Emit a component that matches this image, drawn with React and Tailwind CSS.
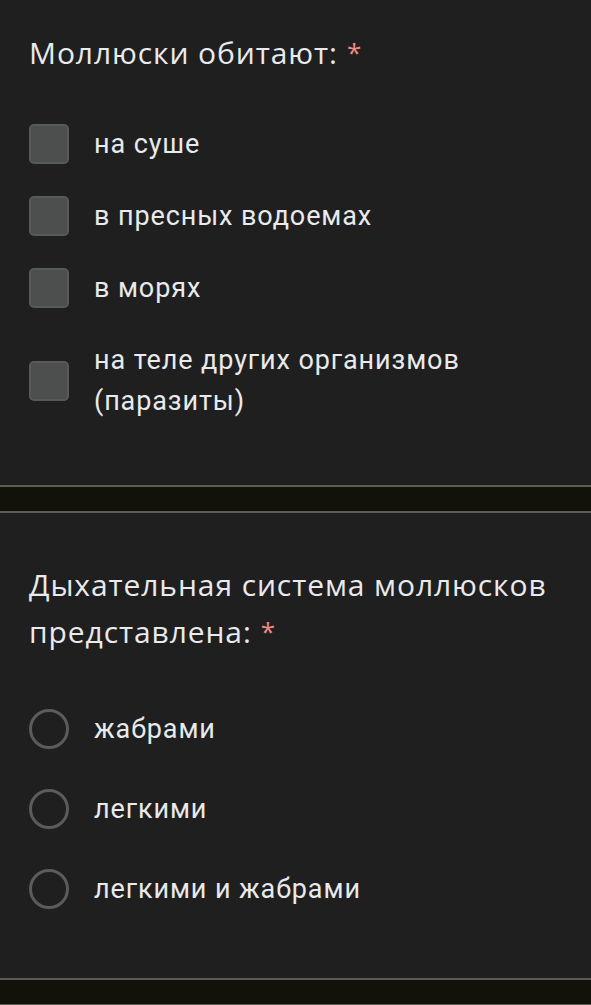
import React from "react";

const TEXT_FONT = { fontFamily: "Roboto, 'Noto Sans', sans-serif" };

function Checkbox() {
  return <span className="block w-[40px] h-[40px] shrink-0 rounded-[5px] bg-[#4d4e4e] border-2 border-[#585959]" />;
}

function Radio() {
  return <span className="block w-[40px] h-[40px] shrink-0 rounded-full border-[3px] border-[#5a5b5b]" />;
}

function Title({ children }) {
  return (
    <h2 className="font-['Open_Sans','Noto_Sans',sans-serif] text-[30px] leading-[47px] tracking-[0.9px] text-[#e8eaed] font-normal">
      {children}
      <span className="text-[#f28b82] text-[26px] leading-none ml-[9px] relative -top-[2px]">*</span>
    </h2>
  );
}

// One option row: control on the left, label beside it
function Option({ kind, label, pad }) {
  return (
    <div className={`flex items-center ${pad}`}>
      {kind === "check" ? <Checkbox /> : <Radio />}
      <span className="ml-[25px] text-[27px] leading-[41px] text-[#e8eaed] tracking-[0.9px]">{label}</span>
    </div>
  );
}

function Divider() {
  return <div className="h-[28px] bg-[#12110a] border-y-2 border-[#5c5c55]" />;
}

export default function App() {
  const habitats = ["на суше", "в пресных водоемах", "в морях", "на теле других организмов (паразиты)"];
  const breathing = ["жабрами", "легкими", "легкими и жабрами"];

  return (
    <div className="w-[591px] h-[1005px] overflow-hidden bg-[#1f1f1f]" style={TEXT_FONT}>
      <section className="pl-[29px] pr-[60px] pt-[29px] pb-[48px]">
        <Title>Моллюски обитают:</Title>
        <div className="mt-[32px]">
          {habitats.map((h) => (
            <Option key={h} kind="check" label={h} pad="py-[15.5px]" />
          ))}
        </div>
      </section>
      <Divider />
      <section className="pl-[29px] pr-[12px] pt-[48px] pb-[49px]">
        <Title>Дыхательная система моллюсков представлена:</Title>
        <div className="mt-[34px]">
          {breathing.map((b) => (
            <Option key={b} kind="radio" label={b} pad="py-[19.5px]" />
          ))}
        </div>
      </section>
      <Divider />
    </div>
  );
}
